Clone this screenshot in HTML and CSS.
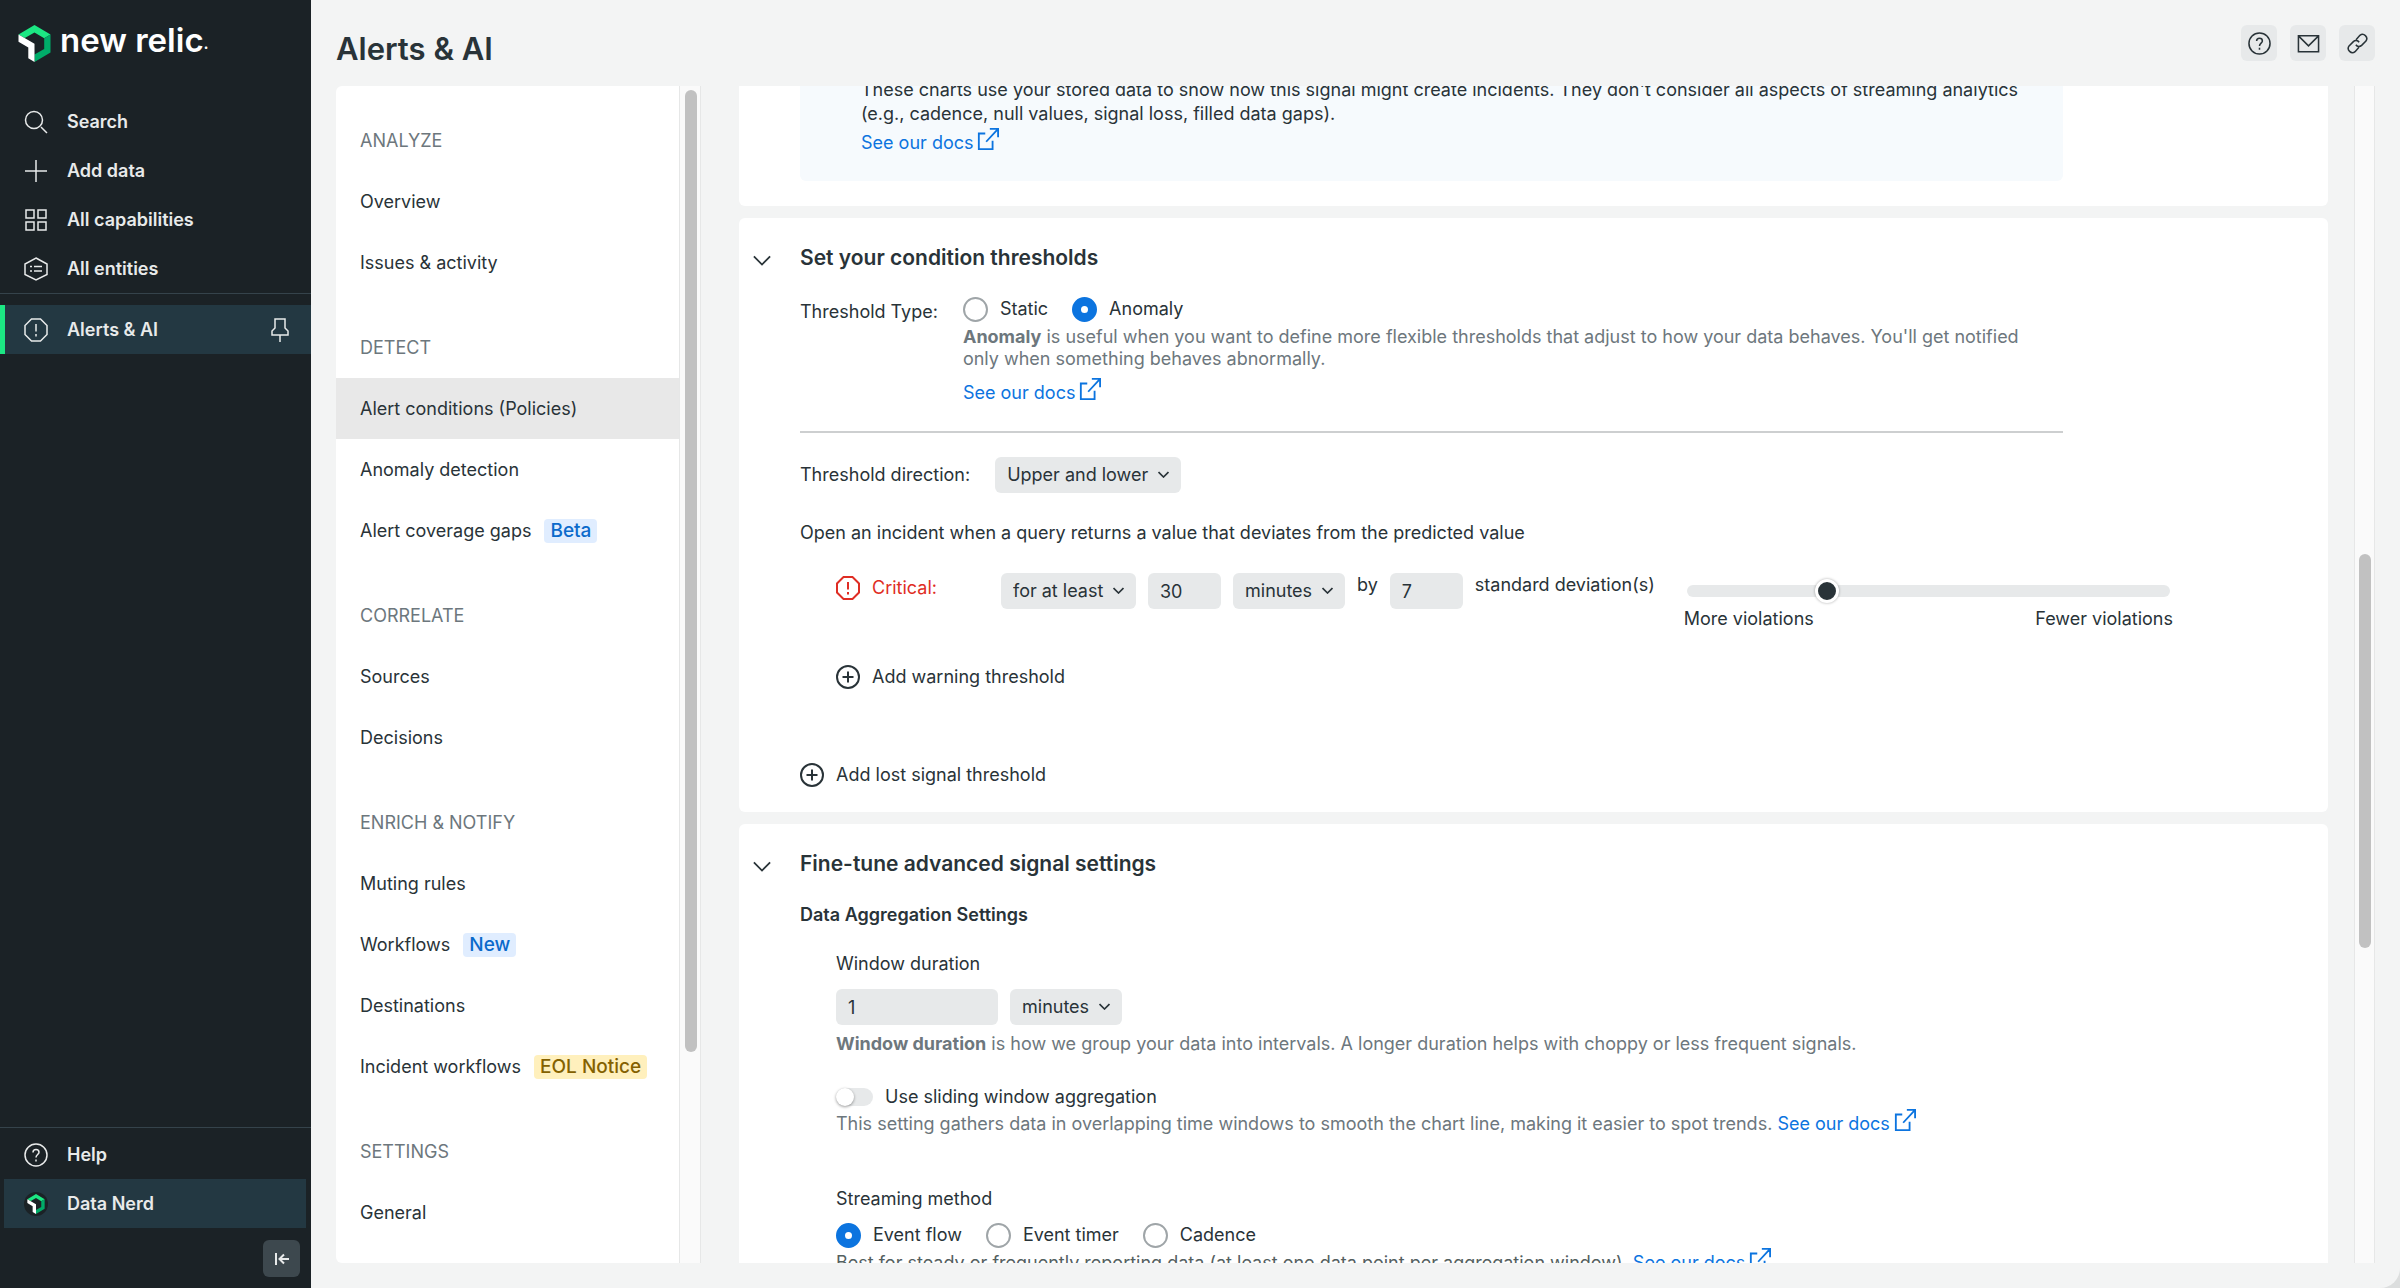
FILE: index.html
```html
<!DOCTYPE html>
<html lang="en">
<head>
<meta charset="utf-8">
<title>Alerts &amp; AI</title>
<link rel="stylesheet" href="styles.css">
</head>
<body>
<svg class="sprite" aria-hidden="true">
  <symbol id="i-relic" viewBox="0 0 32 37">
    <path d="M0 9.500 16 0l16 9.500-6.300 3.700L16 7.500 6.300 13z" fill="#1ce783"/>
    <path d="M32 9.500v18L16 37v-7.500l9.700-5.600V13.200z" fill="#00ac69"/>
    <path d="M0 9.500l16 9.300V37l-6.200-3.700V22.500L0 16.700z" fill="#fff"/>
  </symbol>
  <symbol id="i-external" viewBox="0 0 24 24"><path d="M9 6H2v17h15v-9M14 1h9v9M23 1 10 15"/></symbol>
  <symbol id="i-help" viewBox="0 0 24 24"><circle cx="12" cy="12" r="11"/><path d="M9 9.500C9 7.500 10.300 6.500 12 6.500s3 1 3 2.800c0 2.200-3 2.400-3 5.200M12 16.500v2"/></symbol>
  <symbol id="i-critical" viewBox="0 0 24 24"><path d="M7.500 1h9L23 7.500v9L16.500 23h-9L1 16.500v-9zM12 6v7.500M12 16v2.500"/></symbol>
  <symbol id="i-plus" viewBox="0 0 24 24"><circle cx="12" cy="12" r="11"/><path d="M12 6.500v11M6.500 12h11"/></symbol>
  <symbol id="i-chevron" viewBox="0 0 20 12"><path d="M1 1.500l9 9 9-9"/></symbol>
</svg>

<div class="app">
  <aside class="sidebar">
    <a class="logo" href="#"><svg class="logo-mark"><use href="#i-relic"/></svg><span>new relic</span><small>.</small></a>
    <nav class="menu">
      <a href="#"><svg class="icon" viewBox="0 0 24 24"><circle cx="10" cy="10" r="8.500"/><path d="M17 17l6 6"/></svg>Search</a>
      <a href="#"><svg class="icon" viewBox="0 0 24 24"><path d="M12 1v22M1 12h22"/></svg>Add data</a>
      <a href="#"><svg class="icon" viewBox="0 0 24 24"><path d="M2 2h8v8H2zM14 2h8v8h-8zM2 14h8v8H2zM14 14h8v8h-8z"/></svg>All capabilities</a>
      <a href="#"><svg class="icon" viewBox="0 0 24 24"><path d="M12 1l11 6v10.500L12 23 1 17.500V7zM10 9.500h8M10 14h8M6 9.500h2M6 14h2"/></svg>All entities</a>
    </nav>
    <nav class="menu menu-pinned">
      <a class="current" href="#"><svg class="icon"><use href="#i-critical"/></svg>Alerts &amp; AI
        <svg class="icon pin" viewBox="0 0 24 24"><path d="M7 1h10v9l3 3v4H4v-4l3-3zM12 17v7"/></svg></a>
    </nav>
    <div class="sidebar-foot">
      <nav class="menu">
        <a href="#"><svg class="icon"><use href="#i-help"/></svg>Help</a>
        <a class="account" href="#"><span class="avatar"><svg><use href="#i-relic"/></svg></span>Data Nerd</a>
      </nav>
      <button class="collapse" type="button" aria-label="Collapse navigation"><svg class="icon" viewBox="0 0 24 24"><path d="M6 6v12M19 12h-9M14 7.500 9.500 12l4.500 4.500"/></svg></button>
    </div>
  </aside>

  <div class="page">
    <header class="topbar">
      <h1>Alerts &amp; AI</h1>
      <div class="actions">
        <button type="button" aria-label="Help"><svg class="icon"><use href="#i-help"/></svg></button>
        <button type="button" aria-label="Mail"><svg class="icon" viewBox="0 0 24 24"><path d="M1.500 4h21v16.500h-21zM1.500 4 12 14.500 22.500 4"/></svg></button>
        <button type="button" aria-label="Copy link"><svg class="icon" viewBox="0 0 24 24"><path d="M10.500 8l4-4.500a4.400 4.400 0 0 1 6.300 6L16.300 14c-1.800 1.600-4.600 1.400-6-.7M13.500 16l-4 4.500a4.400 4.400 0 0 1-6.300-6L7.700 10c1.800-1.600 4.600-1.400 6 .7"/></svg></button>
      </div>
    </header>

    <div class="body">
      <nav class="subnav">
        <div class="subnav-list">
          <section><h2>ANALYZE</h2>
            <a href="#">Overview</a>
            <a href="#">Issues &amp; activity</a></section>
          <section><h2>DETECT</h2>
            <a class="current" href="#">Alert conditions (Policies)</a>
            <a href="#">Anomaly detection</a>
            <a href="#">Alert coverage gaps <span class="badge">Beta</span></a></section>
          <section><h2>CORRELATE</h2>
            <a href="#">Sources</a>
            <a href="#">Decisions</a></section>
          <section><h2>ENRICH &amp; NOTIFY</h2>
            <a href="#">Muting rules</a>
            <a href="#">Workflows <span class="badge">New</span></a>
            <a href="#">Destinations</a>
            <a href="#">Incident workflows <span class="badge badge-warn">EOL Notice</span></a></section>
          <section><h2>SETTINGS</h2>
            <a href="#">General</a></section>
        </div>
        <div class="track track-nav" aria-hidden="true"><div class="thumb"></div></div>
      </nav>

      <main class="content">
        <div class="cards">
          <section class="card card-preview">
            <div class="info">
              <p>These charts use your stored data to show how this signal might create incidents. They don't consider all aspects of streaming analytics (e.g., cadence, null values, signal loss, filled data gaps).</p>
              <a class="link" href="#">See our docs<svg class="ext"><use href="#i-external"/></svg></a>
            </div>
          </section>

          <section class="card">
            <button class="fold" type="button" aria-label="Collapse section"><svg><use href="#i-chevron"/></svg></button>
            <div class="card-body">
              <h2>Set your condition thresholds</h2>
              <div class="type-row">
                <span id="type-label">Threshold Type:</span>
                <div class="type-value">
                  <div class="radios" role="radiogroup" aria-labelledby="type-label">
                    <label><input type="radio" name="type">Static</label>
                    <label><input type="radio" name="type" checked>Anomaly</label>
                  </div>
                  <p class="hint"><b>Anomaly</b> is useful when you want to define more flexible thresholds that adjust to how your data behaves. You'll get notified only when something behaves abnormally.</p>
                  <a class="link" href="#">See our docs<svg class="ext"><use href="#i-external"/></svg></a>
                </div>
              </div>
              <hr>
              <div class="direction-row">
                <label for="direction">Threshold direction:</label>
                <span class="select"><select id="direction"><option>Upper and lower</option></select><svg><use href="#i-chevron"/></svg></span>
              </div>
              <p class="rule">Open an incident when a query returns a value that deviates from the predicted value</p>
              <div class="critical-row">
                <span class="critical"><svg class="icon"><use href="#i-critical"/></svg>Critical:</span>
                <span class="select"><select aria-label="Duration type"><option>for at least</option></select><svg><use href="#i-chevron"/></svg></span>
                <input class="field field-short" type="text" value="30" aria-label="Duration">
                <span class="select"><select aria-label="Duration unit"><option>minutes</option></select><svg><use href="#i-chevron"/></svg></span>
                <label class="inline-text" for="deviation">by</label>
                <input class="field field-short" id="deviation" type="text" value="7">
                <span class="inline-text">standard deviation(s)</span>
                <div class="sensitivity">
                  <input type="range" min="0" max="100" value="28" aria-label="Sensitivity">
                  <div class="ends"><span>More violations</span><span>Fewer violations</span></div>
                </div>
              </div>
              <button class="add add-warning" type="button"><svg class="icon"><use href="#i-plus"/></svg>Add warning threshold</button>
              <button class="add" type="button"><svg class="icon"><use href="#i-plus"/></svg>Add lost signal threshold</button>
            </div>
          </section>

          <section class="card">
            <button class="fold" type="button" aria-label="Collapse section"><svg><use href="#i-chevron"/></svg></button>
            <div class="card-body">
              <h2>Fine-tune advanced signal settings</h2>
              <h3>Data Aggregation Settings</h3>
              <div class="settings">
                <label class="field-label" for="window">Window duration</label>
                <div class="window-row">
                  <input class="field" id="window" type="text" value="1">
                  <span class="select"><select aria-label="Window unit"><option>minutes</option></select><svg><use href="#i-chevron"/></svg></span>
                </div>
                <p class="hint"><b>Window duration</b> is how we group your data into intervals. A longer duration helps with choppy or less frequent signals.</p>
                <label class="switch"><input type="checkbox" role="switch">Use sliding window aggregation</label>
                <p class="hint">This setting gathers data in overlapping time windows to smooth the chart line, making it easier to spot trends. <a class="link" href="#">See our docs<svg class="ext"><use href="#i-external"/></svg></a></p>
                <span class="field-label streaming" id="stream-label">Streaming method</span>
                <div class="radios" role="radiogroup" aria-labelledby="stream-label">
                  <label><input type="radio" name="stream" checked>Event flow</label>
                  <label><input type="radio" name="stream">Event timer</label>
                  <label><input type="radio" name="stream">Cadence</label>
                </div>
                <p class="hint hint-dark">Best for steady or frequently reporting data (at least one data point per aggregation window). <a class="link" href="#">See our docs<svg class="ext"><use href="#i-external"/></svg></a></p>
              </div>
            </div>
          </section>
        </div>
        <div class="track track-main" aria-hidden="true"><div class="thumb"></div></div>
      </main>
    </div>
  </div>
</div>
</body>
</html>
```
FILE: styles.css
```css
* { box-sizing: border-box; }
html, body { height: 100%; }
body {
  margin: 0;
  overflow: hidden;
  background: #dcdede;
  color: #293338;
  font: 18px/24px Inter, "Liberation Sans", sans-serif;
  font-optical-sizing: none;
}
h1, h2, h3, p { margin: 0; }
a { color: inherit; text-decoration: none; }
button, input, select { font: inherit; font-optical-sizing: inherit; color: inherit; border: 0; margin: 0; padding: 0; background: none; }
svg { fill: none; stroke: currentColor; stroke-width: 2; flex: none; }
.sprite { position: absolute; width: 0; height: 0; }
.icon { width: 24px; height: 24px; }

.app {
  display: flex;
  height: 100vh;
  overflow: hidden;
  background: #f3f4f4;
  border-radius: 0 0 20px 0;
}

/* global navigation */
.sidebar {
  display: flex;
  flex-direction: column;
  flex: none;
  width: 311px;
  background: #1b2226;
  color: #e8eaea;
}
.logo {
  display: flex;
  align-items: center;
  height: 86px;
  margin-bottom: 11px;
  padding-left: 18px;
  color: #fff;
  font-size: 33px;
  font-weight: 600;
  font-optical-sizing: auto;
}
.logo span { margin: 0 0 6px 9px; }
.logo small { font-size: 16px; align-self: center; }
.logo-mark { width: 33px; height: 37px; stroke: none; }
.menu a {
  display: flex;
  align-items: center;
  gap: 19px;
  height: 49px;
  padding: 0 19px 0 24px;
  font-weight: 600;
}
.menu-pinned { padding-top: 11px; border-top: 1px solid #35434b; }
.menu .current { background: #233842; box-shadow: inset 5px 0 #1ce783; }
.menu .icon { stroke-width: 1.500; }
.menu .pin { margin-left: auto; }
.sidebar-foot { margin-top: auto; border-top: 1px solid #35434b; }
.sidebar-foot .menu { padding-top: 2px; }
.menu .account { margin: 0 5px 0 4px; padding-left: 20px; background: #233842; }
.avatar { display: flex; align-items: center; justify-content: center; width: 24px; height: 24px; border-radius: 12px; background: #1b2226; }
.avatar svg { width: 18px; height: 20px; stroke: none; }
.collapse {
  display: flex;
  align-items: center;
  justify-content: center;
  width: 37px;
  height: 37px;
  margin: 12px 11px 11px auto;
  border-radius: 6px;
  background: #3d484e;
}

/* page frame */
.page { display: flex; flex-direction: column; flex: 1; min-width: 0; padding: 0 25px; }
.topbar { display: flex; align-items: center; justify-content: space-between; height: 86px; }
h1 { padding-top: 11px; font-size: 31px; line-height: 38px; font-weight: 600; font-optical-sizing: auto; }
.actions { display: flex; gap: 13px; }
.actions button {
  display: flex;
  align-items: center;
  justify-content: center;
  width: 36px;
  height: 36px;
  border-radius: 6px;
  background: #e7e9ea;
}
.actions .icon { width: 23px; height: 23px; stroke-width: 1.600; }
.body { display: flex; flex: 1; min-height: 0; gap: 38px; margin-bottom: 25px; }

.track { flex: none; background: #fafafa; border: solid #e6e7e7; border-width: 0 1px; }
.thumb { width: 12px; border-radius: 6px; background: #c1c1c1; }
.track-nav { width: 22px; padding: 4px 0 0 5px; }
.track-nav .thumb { height: 82%; }
.track-main { width: 21px; padding-left: 4px; }
.track-main .thumb { height: 33.5%; margin-top: 468px; }

/* product navigation */
.subnav { display: flex; flex: none; width: 365px; overflow: hidden; border-radius: 6px 0 0 6px; background: #fff; }
.subnav-list { flex: 1; }
.subnav section { padding-top: 24px; }
.subnav h2, .subnav a { display: flex; align-items: center; height: 61px; padding-left: 24px; font-size: 18px; font-weight: 400; }
.subnav h2 { color: #6d777d; }
.subnav .current { background: #e8e8e8; }
.badge { margin-left: 13px; padding: 0 6px; border-radius: 4px; background: #e0edff; color: #0b6acb; font-size: 19px; font-weight: 500; }
.badge-warn { background: #fff0bd; color: #846100; }

/* condition form */
.content { display: flex; flex: 1; min-width: 0; gap: 26px; }
.cards { display: flex; flex-direction: column; flex: 1; min-width: 0; gap: 12px; overflow: hidden; }
.card { display: flex; flex: none; padding: 27px 265px 24px 14px; border-radius: 6px; background: #fff; }
.card-preview { margin-top: -13px; padding: 0 265px 25px 61px; }
.info { flex: 1; padding: 5px 12px 26px 61px; border-radius: 6px; background: #f6fafd; }
.info .link { margin-top: 5px; }
.link { display: inline-flex; align-items: center; color: #0c74df; }
.ext { width: 22px; height: 22px; margin: -8px 0 0 4px; }
.fold { width: 18px; height: 12px; margin: 9px 29px 0 0; }
.fold svg { display: block; width: 18px; height: 11px; }
.card-body { flex: 1; min-width: 0; }
.card h2 { font-size: 21px; line-height: 26px; font-weight: 600; }
.card h3 { margin-top: 26px; font-size: 18px; font-weight: 600; }
.hint { color: #6d777d; line-height: 22px; }
.hint-dark { color: #54605f; }
.radios { display: flex; gap: 24px; }
.radios label { display: flex; align-items: center; gap: 12px; height: 26px; }
input[type="radio"] { appearance: none; width: 25px; height: 25px; border: 2px solid #9fa5a8; border-radius: 50%; background: #fff; }
input[type="radio"]:checked { border: 9px solid #0c74df; }

.type-row { display: flex; gap: 25px; margin-top: 25px; }
.type-row > span { padding-top: 4px; }
.type-value { flex: 1; padding-right: 24px; }
.type-value .hint { margin: 4px 0 11px; }
hr { margin: 26px 0 24px; border: 0; border-top: 2px solid #cdcfd0; }
.direction-row { display: flex; align-items: center; gap: 25px; }
.select { position: relative; display: inline-flex; }
.select select { appearance: none; height: 36px; padding: 0 32px 0 12px; border-radius: 6px; background: #e7e9ea; }
.select svg { position: absolute; right: 12px; top: 14px; width: 11px; height: 7px; stroke-width: 3; pointer-events: none; }
.field { width: 162px; height: 36px; padding-left: 12px; border-radius: 6px; background: #e7e9ea; }
.field-short { width: 73px; }
.rule { margin-top: 28px; }
.critical-row { display: flex; align-items: flex-start; gap: 12px; margin: 28px -110px 0 36px; }
.critical { display: flex; align-items: center; gap: 12px; width: 153px; padding-top: 3px; color: #df2d24; }
.sensitivity { flex: 1; margin-left: 17px; }
.sensitivity input { appearance: none; display: block; width: calc(100% - 6px); height: 12px; margin: 12px 3px 10px; border-radius: 6px; background: #e7e9ea; }
.sensitivity input::-webkit-slider-thumb { appearance: none; width: 24px; height: 24px; border: 3px solid #fff; border-radius: 50%; background: #293338; box-shadow: 0 0 3px #0005; }
.ends { display: flex; justify-content: space-between; }
.add { display: flex; align-items: center; gap: 12px; height: 26px; }
.add-warning { margin: 33px 0 72px 36px; }

.settings { padding: 25px 0 0 36px; }
.field-label { display: block; }
.window-row { display: flex; gap: 12px; margin: 13px 0 8px; }
.switch { display: flex; align-items: center; gap: 12px; margin: 30px 0 4px; }
.switch input { appearance: none; width: 37px; height: 18px; border-radius: 9px; background: #e7e9ea; }
.switch input::before { content: ""; display: block; width: 18px; height: 18px; border-radius: 50%; background: #fff; box-shadow: 0 1px 3px #0006; }
.streaming { margin: 52px 0 11px; }
.settings .radios { margin-bottom: 4px; }
```
